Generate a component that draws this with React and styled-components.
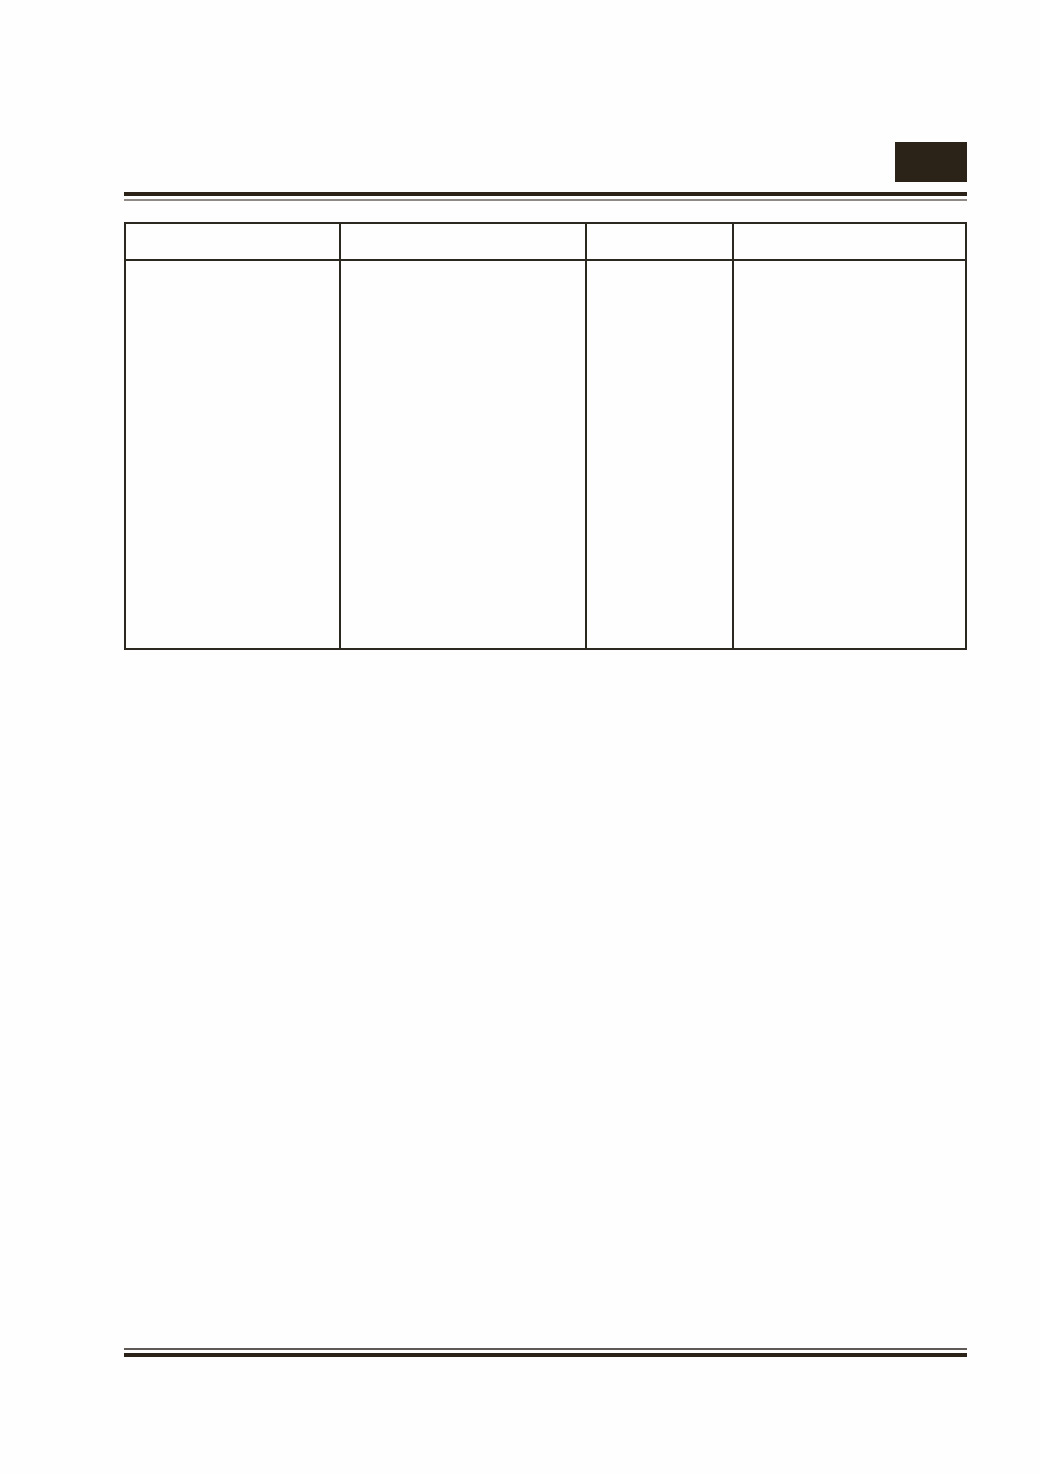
import React from "react";
import styled, { createGlobalStyle } from "styled-components";

const GlobalStyle = createGlobalStyle`
  html, body {
    margin: 0;
    padding: 0;
    background: #fefefe;
    font-family: "Liberation Sans", Arial, sans-serif;
  }
`;

const Page = styled.div`
  width: 1040px;
  height: 1473px;
  box-sizing: border-box;
  padding: 142px 73px 116px 124px;
  display: flex;
  flex-direction: column;
`;

const Header = styled.div`
  display: flex;
  justify-content: flex-end;
`;

const ChapterTab = styled.div`
  width: 72px;
  height: 40px;
  background: #2b2218;
`;

const Rule = styled.div`
  height: ${(props) => props.size}px;
  background: ${(props) => props.color};
  margin-top: ${(props) => props.gap}px;
  flex-shrink: 0;
`;

const Table = styled.div`
  margin-top: 21px;
  display: grid;
  grid-template-columns: 215px 246px 147px 233px;
  grid-template-rows: 37px 389px;
  border-left: 2px solid #2b2820;
  border-top: 2px solid #2b2820;
`;

const Cell = styled.div`
  border-right: 2px solid #2b2820;
  border-bottom: 2px solid #2b2820;
`;

const Spacer = styled.div`
  flex: 1;
`;

const columns = ["a", "b", "c", "d"];

export default function App() {
  return (
    <>
      <GlobalStyle />
      <Page>
        <Header>
          <ChapterTab />
        </Header>
        <Rule size={4} color="#2b2218" gap={10} />
        <Rule size={2} color="#8f8a85" gap={3} />
        <Table>
          {columns.map((c) => (
            <Cell key={"h" + c} />
          ))}
          {columns.map((c) => (
            <Cell key={"b" + c} />
          ))}
        </Table>
        <Spacer />
        <Rule size={2} color="#5f5a55" gap={0} />
        <Rule size={4} color="#2b2218" gap={3} />
      </Page>
    </>
  );
}
